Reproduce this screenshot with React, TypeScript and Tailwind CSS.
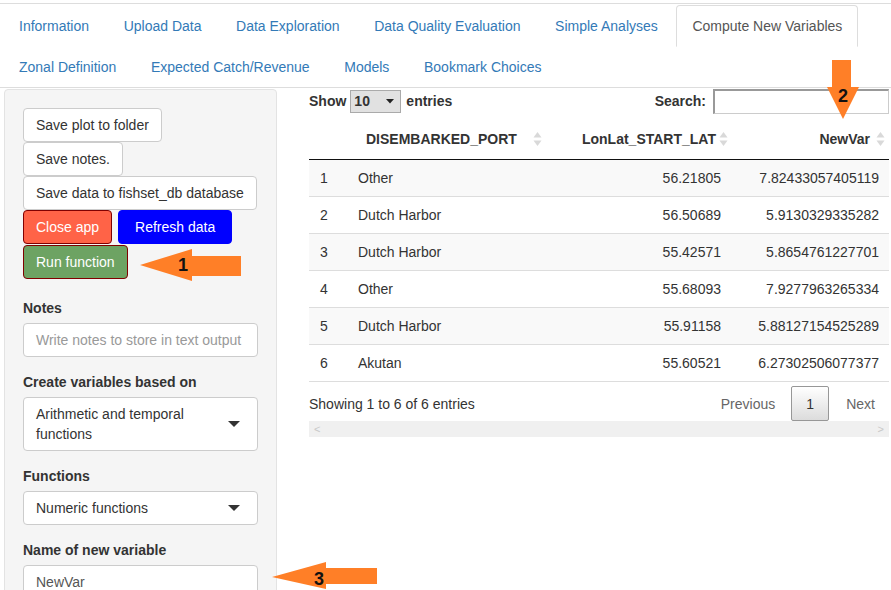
import React from "react";

const tabsRow1 = [
  "Information",
  "Upload Data",
  "Data Exploration",
  "Data Quality Evaluation",
  "Simple Analyses",
  "Compute New Variables",
];
const tabsRow2 = ["Zonal Definition", "Expected Catch/Revenue", "Models", "Bookmark Choices"];

const rows = [
  ["1", "Other", "56.21805", "7.82433057405119"],
  ["2", "Dutch Harbor", "56.50689", "5.9130329335282"],
  ["3", "Dutch Harbor", "55.42571", "5.8654761227701"],
  ["4", "Other", "55.68093", "7.9277963265334"],
  ["5", "Dutch Harbor", "55.91158", "5.88127154525289"],
  ["6", "Akutan", "55.60521", "6.27302506077377"],
];

function Tab({ label, active }: { label: string; active?: boolean }) {
  return (
    <li className="mr-[2.6px] -mb-px list-none">
      <a
        className={
          active
            ? "block rounded-t-[4px] border border-[#ddd] border-b-transparent bg-white px-[15px] py-[10px] leading-5 text-[#555]"
            : "block rounded-t-[4px] border border-transparent px-[15px] py-[10px] leading-5 text-[#337ab7]"
        }
      >
        {label}
      </a>
    </li>
  );
}

function SortIcon() {
  return (
    <svg width="9" height="16" viewBox="0 0 9 16" className="shrink-0">
      <path d="M4.5 1 L8.5 6.5 L0.5 6.5 Z" fill="#d9d9d9" />
      <path d="M4.5 15 L8.5 9.5 L0.5 9.5 Z" fill="#d9d9d9" />
    </svg>
  );
}

function Caret() {
  return (
    <svg width="12" height="7" viewBox="0 0 12 7">
      <path d="M0 0 L12 0 L6 6 Z" fill="#333" />
    </svg>
  );
}

function Btn({ children, className }: { children: React.ReactNode; className: string }) {
  return (
    <button className={"rounded-[4px] border px-[12px] py-[6px] leading-5 " + className}>
      {children}
    </button>
  );
}

export default function App() {
  return (
    <div className="relative h-[590px] w-[891px] overflow-hidden bg-white font-['Liberation_Sans',Arial,sans-serif] text-[14px] leading-5 text-[#333]">
      <div className="h-[4px] border-b border-[#ddd]" />

      {/* tabs */}
      <div className="mt-px border-b border-[#ddd] pl-[3px]">
        <ul className="flex">
          {tabsRow1.map((t) => (
            <Tab key={t} label={t} active={t === "Compute New Variables"} />
          ))}
        </ul>
        <ul className="flex">
          {tabsRow2.map((t) => (
            <Tab key={t} label={t} />
          ))}
        </ul>
      </div>

      <div className="mt-px flex">
        {/* sidebar */}
        <div className="ml-[4px] w-[273px] shrink-0 rounded-[4px] border border-[#e3e3e3] bg-[#f5f5f5] p-[18px] pb-[40px]">
          <div className="flex flex-col items-start">
            <Btn className="border-[#ccc] bg-white">Save plot to folder</Btn>
            <Btn className="border-[#ccc] bg-white">Save notes.</Btn>
            <Btn className="border-[#ccc] bg-white">Save data to fishset_db database</Btn>
            <div className="flex gap-[6px]">
              <Btn className="border-[#800000] bg-[#ff6347] text-white">Close app</Btn>
              <Btn className="border-[#0000ff] bg-[#0000ff] px-[16px] text-white">Refresh data</Btn>
            </div>
            <Btn className="mt-px border-[#800000] bg-[#6da363] text-white">Run function</Btn>
          </div>

          <div className="mt-[19px] w-[235px]">
            <label className="mb-[5px] block font-bold">Notes</label>
            <div className="h-[34px] rounded-[4px] border border-[#ccc] bg-white px-[12px] py-[6px] text-[#999]">
              Write notes to store in text output
            </div>

            <label className="mt-[15px] mb-[5px] block font-bold">Create variables based on</label>
            <div className="flex items-center justify-between rounded-[4px] border border-[#ccc] bg-white py-[6px] pr-[17px] pl-[12px]">
              <span>
                Arithmetic and temporal
                <br />
                functions
              </span>
              <Caret />
            </div>

            <label className="mt-[15px] mb-[5px] block font-bold">Functions</label>
            <div className="flex h-[34px] items-center justify-between rounded-[4px] border border-[#ccc] bg-white pr-[17px] pl-[12px]">
              <span>Numeric functions</span>
              <Caret />
            </div>

            <label className="mt-[15px] mb-[5px] block font-bold">Name of new variable</label>
            <div className="h-[34px] rounded-[4px] border border-[#ccc] bg-white px-[12px] py-[6px] text-[#555]">
              NewVar
            </div>
          </div>
        </div>

        {/* main */}
        <div className="ml-[32px] w-[580px]">
          <div className="flex h-[24px] items-center justify-between">
            <div className="flex items-center font-bold">
              <span>Show</span>
              <div className="ml-[4px] flex h-[23px] w-[51px] items-center justify-between border border-[#aaa] bg-[#e1e1e1] pr-[6px] pl-[3px]">
                <span>10</span>
                <svg width="8" height="5" viewBox="0 0 8 5">
                  <path d="M0 0 L8 0 L4 4.5 Z" fill="#222" />
                </svg>
              </div>
              <span className="ml-[5px]">entries</span>
            </div>
            <div className="flex items-center font-bold">
              <span>Search:</span>
              <div className="ml-[7px] h-[25px] w-[176px] border border-[#ccc] border-t-2 border-l-2 border-t-[#999] border-l-[#999] bg-white" />
            </div>
          </div>

          <table className="mt-[6px] w-[580px] table-fixed border-collapse">
            <colgroup>
              <col className="w-[39px]" />
              <col className="w-[202px]" />
              <col className="w-[181px]" />
              <col className="w-[158px]" />
            </colgroup>
            <thead>
              <tr className="border-b border-[#111]">
                <th className="px-[10px] py-[10px]" />
                <th className="py-[10px] pr-[8px] pl-[18px] text-left font-bold">
                  <div className="flex items-center justify-between">
                    <span>DISEMBARKED_PORT</span>
                    <SortIcon />
                  </div>
                </th>
                <th className="py-[10px] pr-[3px] pl-[10px] text-right font-bold">
                  <div className="flex items-center justify-end gap-[3px]">
                    <span>LonLat_START_LAT</span>
                    <SortIcon />
                  </div>
                </th>
                <th className="py-[10px] pr-[4px] pl-[10px] text-right font-bold">
                  <div className="flex items-center justify-end gap-[6px]">
                    <span>NewVar</span>
                    <SortIcon />
                  </div>
                </th>
              </tr>
            </thead>
            <tbody>
              {rows.map((r, i) => (
                <tr
                  key={r[0]}
                  className={
                    (i % 2 === 0 ? "bg-[#f9f9f9] " : "bg-white ") +
                    (i === rows.length - 1 ? "border-b border-[#111]" : "") +
                    (i > 0 ? " border-t border-[#ddd]" : "")
                  }
                >
                  <td className="px-[10px] py-[8px] pl-[11px]">{r[0]}</td>
                  <td className="px-[10px] py-[8px]">{r[1]}</td>
                  <td className="px-[10px] py-[8px] text-right">{r[2]}</td>
                  <td className="px-[10px] py-[8px] text-right">{r[3]}</td>
                </tr>
              ))}
            </tbody>
          </table>

          <div className="mt-[4px] flex items-center justify-between">
            <span className="pt-[1px]">Showing 1 to 6 of 6 entries</span>
            <div className="flex items-center text-[#666]">
              <span className="px-[16px] py-[7px]">Previous</span>
              <span className="flex h-[35px] w-[38px] items-center justify-center rounded-[2px] border border-[#979797] bg-gradient-to-b from-white to-[#dcdcdc] text-[#333]">
                1
              </span>
              <span className="py-[7px] pr-[14px] pl-[17px]">Next</span>
            </div>
          </div>
          <div className="flex h-[16px] items-center justify-between bg-[#f0f0f0] px-[5px] text-[11px] text-[#c8c8c8]">
            <span>&lt;</span>
            <span>&gt;</span>
          </div>
        </div>
      </div>

      {/* annotation arrows */}
      <svg className="pointer-events-none absolute top-0 left-0" width="891" height="590">
        <polygon points="140,265 192,249 192,256 241,256 241,276 192,276 192,281" fill="#ff7f27" />
        <polygon points="832,60 851,60 851,87 859,87 843,119 827,87 832,87" fill="#ff7f27" />
        <polygon points="272,577 326,562 326,568 377,568 377,584 326,584 326,589" fill="#ff7f27" />
        <text x="183" y="271" textAnchor="middle" fontFamily="Liberation Sans, Arial, sans-serif" fontWeight="bold" fontSize="18" fill="#111">1</text>
        <text x="843" y="102" textAnchor="middle" fontFamily="Liberation Sans, Arial, sans-serif" fontWeight="bold" fontSize="18" fill="#111">2</text>
        <text x="319" y="585" textAnchor="middle" fontFamily="Liberation Sans, Arial, sans-serif" fontWeight="bold" fontSize="18" fill="#111">3</text>
      </svg>
    </div>
  );
}
